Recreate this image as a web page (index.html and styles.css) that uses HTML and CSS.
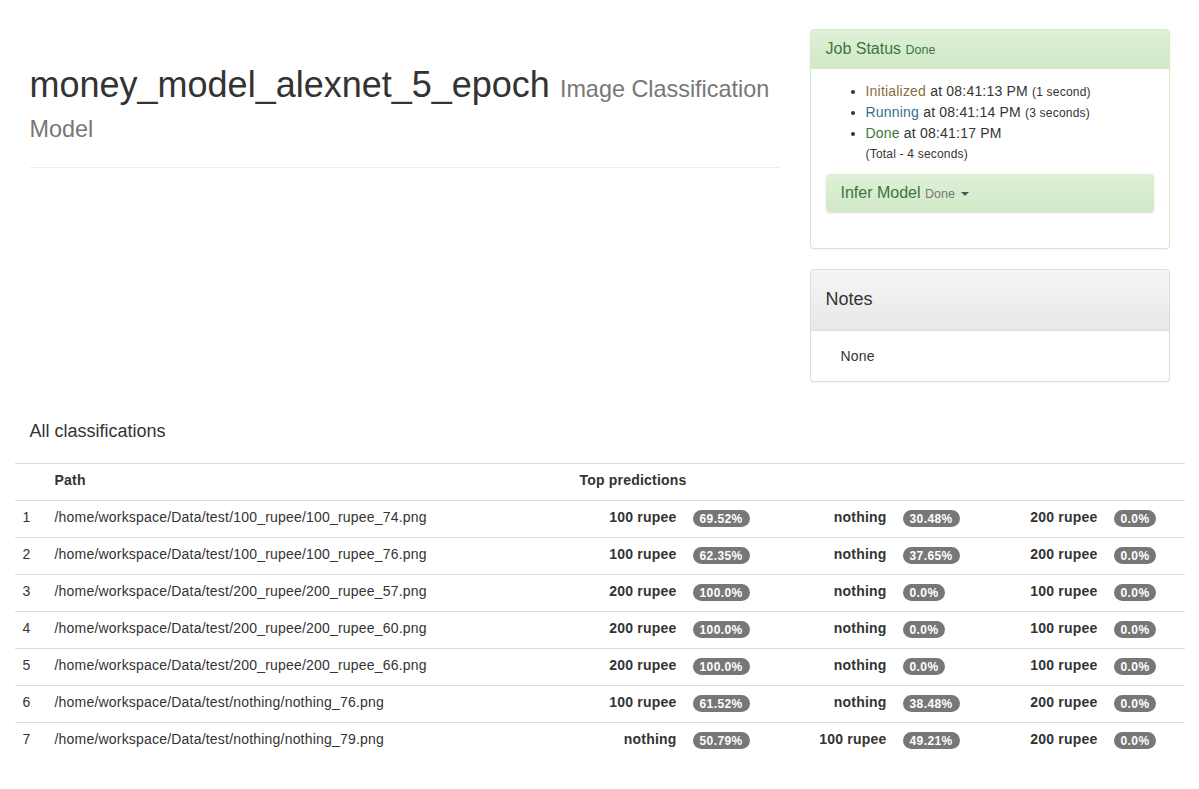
FILE: index.html
```html
<!DOCTYPE html>
<html>
<head>
<meta charset="utf-8">
<title>money_model_alexnet_5_epoch</title>
<link rel="stylesheet" href="styles.css">
</head>
<body>
<div class="container">
  <div class="top-row">
    <div class="col-main">
      <div class="page-header">
        <h1>money_model_alexnet_5_epoch <small>Image Classification Model</small></h1>
      </div>
    </div>
    <div class="col-side">
      <div class="panel panel-success">
        <div class="panel-heading">
          <h3 class="panel-title">Job Status <small>Done</small></h3>
        </div>
        <div class="panel-body">
          <ul class="status-list">
            <li><span class="text-warning">Initialized</span> at 08:41:13 PM <small>(1 second)</small></li>
            <li><span class="text-info">Running</span> at 08:41:14 PM <small>(3 seconds)</small></li>
            <li><span class="text-success">Done</span> at 08:41:17 PM<br><small>(Total - 4 seconds)</small></li>
          </ul>
          <div class="task-box">
            <h3 class="task-title">Infer Model <small>Done</small> <span class="caret"></span></h3>
          </div>
        </div>
      </div>
      <div class="panel panel-default">
        <div class="panel-heading">
          <h4 class="notes-title">Notes</h4>
        </div>
        <div class="panel-body">
          <p class="notes-text">None</p>
        </div>
      </div>
    </div>
  </div>

  <h4 class="section-title">All classifications</h4>
  <table class="table">
    <colgroup>
      <col class="c-num"><col class="c-path">
      <col class="c-l1"><col class="c-b1">
      <col class="c-l2"><col class="c-b2">
      <col class="c-l3"><col class="c-b3">
    </colgroup>
    <thead>
      <tr><th></th><th>Path</th><th colspan="6">Top predictions</th></tr>
    </thead>
    <tbody>
      <tr><td>1</td><td>/home/workspace/Data/test/100_rupee/100_rupee_74.png</td>
        <td class="lbl">100 rupee</td><td><span class="badge">69.52%</span></td>
        <td class="lbl">nothing</td><td><span class="badge">30.48%</span></td>
        <td class="lbl">200 rupee</td><td><span class="badge">0.0%</span></td></tr>
      <tr><td>2</td><td>/home/workspace/Data/test/100_rupee/100_rupee_76.png</td>
        <td class="lbl">100 rupee</td><td><span class="badge">62.35%</span></td>
        <td class="lbl">nothing</td><td><span class="badge">37.65%</span></td>
        <td class="lbl">200 rupee</td><td><span class="badge">0.0%</span></td></tr>
      <tr><td>3</td><td>/home/workspace/Data/test/200_rupee/200_rupee_57.png</td>
        <td class="lbl">200 rupee</td><td><span class="badge">100.0%</span></td>
        <td class="lbl">nothing</td><td><span class="badge">0.0%</span></td>
        <td class="lbl">100 rupee</td><td><span class="badge">0.0%</span></td></tr>
      <tr><td>4</td><td>/home/workspace/Data/test/200_rupee/200_rupee_60.png</td>
        <td class="lbl">200 rupee</td><td><span class="badge">100.0%</span></td>
        <td class="lbl">nothing</td><td><span class="badge">0.0%</span></td>
        <td class="lbl">100 rupee</td><td><span class="badge">0.0%</span></td></tr>
      <tr><td>5</td><td>/home/workspace/Data/test/200_rupee/200_rupee_66.png</td>
        <td class="lbl">200 rupee</td><td><span class="badge">100.0%</span></td>
        <td class="lbl">nothing</td><td><span class="badge">0.0%</span></td>
        <td class="lbl">100 rupee</td><td><span class="badge">0.0%</span></td></tr>
      <tr><td>6</td><td>/home/workspace/Data/test/nothing/nothing_76.png</td>
        <td class="lbl">100 rupee</td><td><span class="badge">61.52%</span></td>
        <td class="lbl">nothing</td><td><span class="badge">38.48%</span></td>
        <td class="lbl">200 rupee</td><td><span class="badge">0.0%</span></td></tr>
      <tr><td>7</td><td>/home/workspace/Data/test/nothing/nothing_79.png</td>
        <td class="lbl">nothing</td><td><span class="badge">50.79%</span></td>
        <td class="lbl">100 rupee</td><td><span class="badge">49.21%</span></td>
        <td class="lbl">200 rupee</td><td><span class="badge">0.0%</span></td></tr>
    </tbody>
  </table>
</div>
</body>
</html>
```
FILE: styles.css
```css
* { box-sizing: border-box; }
html, body { margin: 0; padding: 0; }
body {
  font-family: "Liberation Sans", Arial, Helvetica, sans-serif;
  font-size: 14px;
  line-height: 20px;
  color: #333;
  background: #fff;
}
.container {
  width: 1170px;
  margin: 0 auto;
  padding: 0 15px;
}
.top-row {
  display: flex;
  align-items: flex-start;
  gap: 30px;
}
.col-main { width: 750px; flex: none; }
.col-side { width: 360px; flex: none; padding-top: 29px; }

.page-header {
  margin: 0 0 20px;
  padding-top: 65px;
  padding-bottom: 9px;
  border-bottom: 1px solid #eee;
}
.page-header h1 {
  margin: 0 0 14px;
  font-size: 36px;
  font-weight: 500;
  line-height: 1.1;
  color: #333;
}
.page-header h1 small {
  font-size: 65%;
  font-weight: 400;
  color: #777;
}

.panel {
  margin-bottom: 20px;
  background: #fff;
  border: 1px solid #ddd;
  border-radius: 4px;
  box-shadow: 0 1px 2px rgba(0,0,0,.05);
}
.panel-heading {
  padding: 10px 15px;
  border-bottom: 1px solid transparent;
  border-top-left-radius: 3px;
  border-top-right-radius: 3px;
}
.panel-success { border-color: #d6e9c6; }
.panel-success .panel-heading {
  color: #3c763d;
  background: linear-gradient(to bottom, #dff0d8 0%, #d0e9c6 100%);
  border-color: #d6e9c6;
}
.panel-default .panel-heading {
  color: #333;
  background: linear-gradient(to bottom, #f5f5f5 0%, #e8e8e8 100%);
  border-color: #ddd;
}
.panel-title {
  margin: 0;
  font-size: 16px;
  font-weight: 500;
  line-height: 1.1;
}
.panel-title small {
  font-size: 12.5px;
  color: #3c763d;
  font-weight: 400;
}
.panel-body { padding: 12px 15px 15px; }

.status-list {
  margin: 0 0 10px;
  padding-left: 40px;
  letter-spacing: 0.2px;
}
.status-list small { font-size: 12px; letter-spacing: 0.2px; }
.text-warning { color: #8a6d3b; }
.text-info { color: #31708f; }
.text-success { color: #3c763d; }

.task-box {
  margin-bottom: 21px;
  padding: 10px 15px;
  border-radius: 4px;
  background: linear-gradient(to bottom, #dff0d8 0%, #d0e9c6 100%);
  box-shadow: 0 1px 2px rgba(0,0,0,.15);
}
.task-title {
  margin: 0;
  font-size: 16px;
  font-weight: 500;
  line-height: 1.1;
  color: #3c763d;
}
.task-title small {
  font-size: 12.5px;
  font-weight: 400;
  color: #777;
}
.caret {
  display: inline-block;
  width: 0;
  height: 0;
  margin-left: 2px;
  vertical-align: middle;
  border-top: 4px solid #555;
  border-left: 4px solid transparent;
  border-right: 4px solid transparent;
}

.notes-title {
  margin: 10px 0 11px;
  font-size: 18px;
  font-weight: 500;
  line-height: 1.1;
}
.panel-default .panel-body { padding: 15px; }
.notes-text { margin: 0; padding-left: 15px; letter-spacing: 0.2px; }

.section-title {
  margin: 20px 0 21px;
  font-size: 18px;
  font-weight: 500;
  line-height: 1.1;
}

.table {
  width: 1170px;
  margin: 0 -15px 20px;
  border-collapse: collapse;
  border-spacing: 0;
  table-layout: fixed;
  letter-spacing: 0.2px;
}
.c-num { width: 32px; }
.c-path { width: 525px; }
.c-l1 { width: 113px; }
.c-b1 { width: 80px; }
.c-l2 { width: 130px; }
.c-b2 { width: 80px; }
.c-l3 { width: 131px; }
.c-b3 { width: 79px; }
.table th, .table td {
  padding: 6px 8px 10px;
  line-height: 20px;
  vertical-align: top;
  border-top: 1px solid #ddd;
  text-align: left;
  white-space: nowrap;
}
.table th { font-weight: 700; }
.table td.lbl { text-align: right; font-weight: 700; }
.badge {
  display: inline-block;
  min-width: 10px;
  padding: 3px 7px 2px;
  font-size: 12px;
  font-weight: 700;
  line-height: 1;
  letter-spacing: 0.4px;
  color: #fff;
  text-align: center;
  white-space: nowrap;
  vertical-align: middle;
  background-color: #777;
  border-radius: 10px;
}
```
